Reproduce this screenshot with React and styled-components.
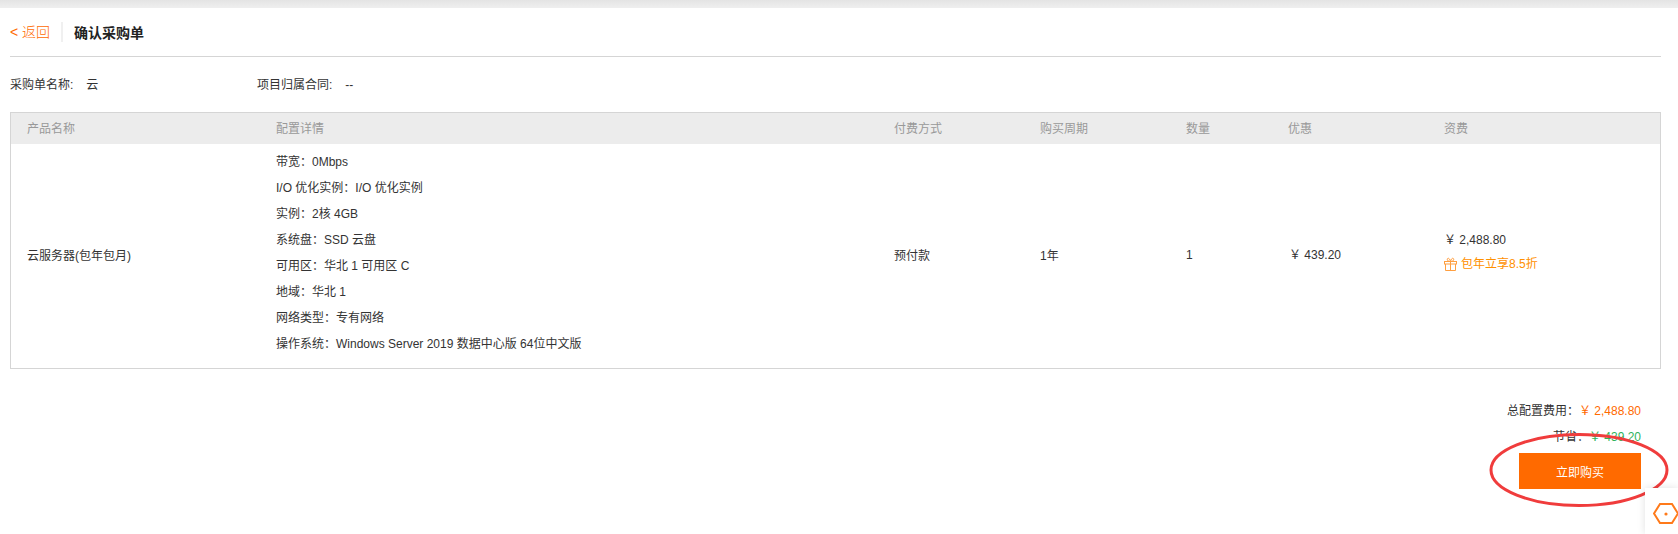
import React from 'react'
import styled, { createGlobalStyle } from 'styled-components'

const GlobalStyle = createGlobalStyle`
    html, body {
        margin: 0;
        padding: 0;
        height: 534px;
        overflow: hidden;
        background: #fff;
        font-family: "Liberation Sans", "Noto Sans CJK SC", sans-serif;
        font-size: 12px;
        color: #333;
    }
`;

const Page = styled.div`
    position: relative;
    width: 1678px;
    height: 534px;
    overflow: hidden;
`;

const TopShade = styled.div`
    height: 8px;
    background: linear-gradient(#e4e4e4, #efefef);
`;

const Content = styled.div`
    padding: 0 17px 0 10px;
`;

const TitleBar = styled.div`
    display: flex;
    align-items: center;
    height: 48px;
    border-bottom: 1px solid #d5d5d5;
`;

const BackLink = styled.a`
    color: #ff6a00;
    font-size: 14px;
    font-weight: 300;
    padding-right: 11px;
    margin-right: 11px;
    line-height: 20px;
    border-right: 2px solid #f0f0f0;
`;

const Title = styled.h1`
    margin: 0;
    font-size: 14px;
    font-weight: 700;
    color: #222;
`;

const InfoRow = styled.div`
    display: flex;
    align-items: center;
    height: 53px;
    padding-bottom: 2px;
`;

const InfoItem = styled.div`
    width: ${p => p.width}px;
    color: #333;
`;

const InfoValue = styled.span`
    margin-left: ${p => p.gap}px;
`;

const OrderTable = styled.div`
    border: 1px solid #d5d5d5;
`;

const columns = '249px 618px 146px 146px 102px 156px 1fr';

const HeadRow = styled.div`
    display: grid;
    grid-template-columns: ${columns};
    align-items: center;
    height: 29px;
    padding: 0 0 2px 16px;
    background: #ececec;
    color: #999;
`;

const BodyRow = styled.div`
    display: grid;
    grid-template-columns: ${columns};
    align-items: center;
    padding: 4px 0 7px 16px;
    color: #333;
`;

const SpecList = styled.div`
    padding: 1px 0 4px;
`;

const SpecLine = styled.div`
    line-height: 26px;
`;

const Price = styled.div`
    padding-left: ${p => p.inset || 0}px;
    line-height: 20px;
`;

const FeeCell = styled.div`
    padding-bottom: 5px;
`;

const Promo = styled.div`
    display: flex;
    align-items: center;
    gap: 4px;
    margin-top: 4px;
    line-height: 20px;
    color: #ff9000;
`;

const Summary = styled.div`
    display: flex;
    flex-direction: column;
    align-items: flex-end;
    padding: 29px 20px 0 0;
`;

const SummaryLine = styled.div`
    line-height: 26px;
    color: #333;
`;

const Amount = styled.span`
    color: ${p => p.color};
`;

const BuyButton = styled.button`
    width: 122px;
    height: 36px;
    margin-top: 3px;
    border: 0;
    padding: 0;
    background: #ff6a00;
    color: #fff;
    font: inherit;
`;

const Ellipse = styled.svg`
    position: absolute;
    left: 1486px;
    top: 430px;
    pointer-events: none;
`;

const SideWidget = styled.div`
    position: absolute;
    left: 1645px;
    top: 488px;
    width: 33px;
    height: 46px;
    box-sizing: border-box;
    padding: 15px 0 0 8px;
    background: #fff;
    box-shadow: 0 0 8px rgba(0, 0, 0, 0.12);
`;

const specs = [
    '带宽：0Mbps',
    'I/O 优化实例：I/O 优化实例',
    '实例：2核 4GB',
    '系统盘：SSD 云盘',
    '可用区：华北 1 可用区 C',
    '地域：华北 1',
    '网络类型：专有网络',
    '操作系统：Windows Server 2019 数据中心版 64位中文版',
];

const heads = ['产品名称', '配置详情', '付费方式', '购买周期', '数量', '优惠', '资费'];

const GiftIcon = () => (
    <svg width="13" height="14" viewBox="0 0 13 14" fill="none" stroke="#ff9f40" strokeWidth="1">
        <rect x="0.5" y="4.5" width="12" height="2.5" />
        <path d="M1.5 7v6.5h10V7M6.5 4.5v9M6.5 4.5C4 4.5 2.8 3.2 3.4 1.8 4.2.4 6 1.8 6.5 4.5 7 1.8 8.8.4 9.6 1.8 10.2 3.2 9 4.5 6.5 4.5z" />
    </svg>
);

const HexIcon = () => (
    <svg width="26" height="21" viewBox="0 0 26 21" fill="none">
        <path d="M1 10.5 7 1h12l6 9.500L19 20H7z" stroke="#ff7a1a" strokeWidth="2" />
        <circle cx="13" cy="11" r="1.6" fill="#ff7a1a" />
    </svg>
);

const App = () => (
    <Page>
        <GlobalStyle />
        <TopShade />
        <Content>
            <TitleBar>
                <BackLink>&lt; 返回</BackLink>
                <Title>确认采购单</Title>
            </TitleBar>
            <InfoRow>
                <InfoItem width={247}>采购单名称:<InfoValue gap={13}>云</InfoValue></InfoItem>
                <InfoItem>项目归属合同:<InfoValue gap={13}>--</InfoValue></InfoItem>
            </InfoRow>
            <OrderTable>
                <HeadRow>
                    {heads.map(h => <div key={h}>{h}</div>)}
                </HeadRow>
                <BodyRow>
                    <div>云服务器(包年包月)</div>
                    <SpecList>
                        {specs.map(s => <SpecLine key={s}>{s}</SpecLine>)}
                    </SpecList>
                    <div>预付款</div>
                    <div>1年</div>
                    <div>1</div>
                    <Price inset={1}>￥ 439.20</Price>
                    <FeeCell>
                        <Price>￥ 2,488.80</Price>
                        <Promo><GiftIcon />包年立享8.5折</Promo>
                    </FeeCell>
                </BodyRow>
            </OrderTable>
            <Summary>
                <SummaryLine>总配置费用：<Amount color="#ff6a00">￥ 2,488.80</Amount></SummaryLine>
                <SummaryLine>节省：<Amount color="#2fb35c">￥ 439.20</Amount></SummaryLine>
                <BuyButton>立即购买</BuyButton>
            </Summary>
        </Content>
        <Ellipse width="186" height="80" viewBox="0 0 186 80">
            <ellipse cx="93" cy="40" rx="88" ry="35.500" fill="none" stroke="#f03c3c" strokeWidth="3" />
        </Ellipse>
        <SideWidget><HexIcon /></SideWidget>
    </Page>
)

export default App
